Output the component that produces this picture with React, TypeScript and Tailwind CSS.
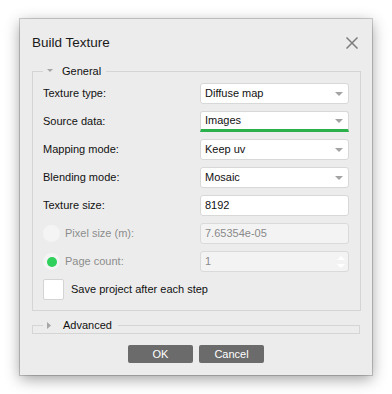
import React from 'react';

const font = { fontFamily: '"Liberation Sans", Arial, sans-serif' };

function Caret() {
  return (
    <svg width="8" height="4" viewBox="0 0 8 4" className="shrink-0">
      <path d="M0 0 H8 L4 4 Z" fill="#a3a3a3" />
    </svg>
  );
}

function Select({ value, active }: { value: string; active?: boolean }) {
  return (
    <div
      className={
        'w-[149px] h-[21px] bg-white flex items-center justify-between pl-[4px] pr-[5px] text-[11px] text-[#111] border border-[#d8d8d8] ' +
        (active ? 'rounded-t-[3px] border-b-[3px] border-b-[#2bb04c]' : 'rounded-[3px]')
      }
    >
      <span>{value}</span>
      <Caret />
    </div>
  );
}

function Row({ label, children }: { label: string; children: React.ReactNode }) {
  return (
    <div className="flex items-center h-[21px]">
      <span className="w-[157px] text-[11px] text-[#111]">{label}</span>
      {children}
    </div>
  );
}

function Radio({ checked }: { checked?: boolean }) {
  return (
    <span className="w-[17px] h-[17px] rounded-full bg-[#f4f4f4] flex items-center justify-center shrink-0">
      {checked && <span className="w-[10px] h-[10px] rounded-full bg-[#2fd05c]" />}
    </span>
  );
}

export default function App() {
  return (
    <div className="w-[392px] h-[394px] bg-white overflow-hidden pt-[19px]" style={font}>
      <div className="ml-[20px] w-[352px] h-[356px] bg-[#ececec] flex flex-col shadow-[0_0_0_1px_rgba(0,0,0,0.18),0_4px_14px_rgba(0,0,0,0.38)]">
        <div className="h-[44px] pt-[4px] flex items-center justify-between pl-[12px] pr-[14px]">
          <span className="text-[13.5px] text-[#1a1a1a]">Build Texture</span>
          <svg width="12" height="12" viewBox="0 0 12 12">
            <path d="M0.5 0.5 L11.5 11.5 M11.5 0.5 L0.5 11.5" stroke="#7c7c7c" strokeWidth="1.5" />
          </svg>
        </div>

        <fieldset className="mx-[12px] border border-[#d5d5d5] pl-[10px] pr-[11px] pt-[4px] pb-[10px]">
          <legend className="h-[16px] flex items-center pl-[4px] pr-[5px]">
            <svg width="6" height="3" viewBox="0 0 6 3" className="mt-[-2px]">
              <path d="M0 0 H6 L3 3 Z" fill="#a6a6a6" />
            </svg>
            <span className="ml-[9px] text-[11px] text-[#111]">General</span>
          </legend>
          <div className="flex flex-col gap-[7px]">
            <Row label="Texture type:">
              <Select value="Diffuse map" />
            </Row>
            <Row label="Source data:">
              <Select value="Images" active />
            </Row>
            <Row label="Mapping mode:">
              <Select value="Keep uv" />
            </Row>
            <Row label="Blending mode:">
              <Select value="Mosaic" />
            </Row>
            <Row label="Texture size:">
              <div className="w-[149px] h-[21px] bg-white border border-[#d8d8d8] rounded-[3px] flex items-center pl-[4px] text-[11px] text-[#111]">
                8192
              </div>
            </Row>
            <div className="flex items-center h-[21px]">
              <div className="w-[157px] flex items-center gap-[5px]">
                <Radio />
                <span className="text-[11px] text-[#8c8c8c]">Pixel size (m):</span>
              </div>
              <div className="w-[149px] h-[21px] bg-[#f3f3f3] border border-[#dadada] rounded-[3px] flex items-center pl-[4px] text-[11px] text-[#8a8a8a]">
                7.65354e-05
              </div>
            </div>
            <div className="flex items-center h-[21px]">
              <div className="w-[157px] flex items-center gap-[5px]">
                <Radio checked />
                <span className="text-[11px] text-[#8c8c8c]">Page count:</span>
              </div>
              <div className="w-[149px] h-[21px] bg-[#f3f3f3] border border-[#dadada] rounded-[3px] flex items-center justify-between pl-[4px] pr-[3px] text-[11px] text-[#8a8a8a]">
                <span>1</span>
                <div className="flex flex-col gap-[4px]">
                  <svg width="8" height="4" viewBox="0 0 8 4">
                    <path d="M0 4 H8 L4 0 Z" fill="#ffffff" />
                  </svg>
                  <svg width="8" height="4" viewBox="0 0 8 4">
                    <path d="M0 0 H8 L4 4 Z" fill="#ffffff" />
                  </svg>
                </div>
              </div>
            </div>
            <div className="flex items-center h-[21px]">
              <span className="w-[21px] h-[21px] bg-white border border-[#d4d4d4] rounded-[2px]" />
              <span className="ml-[7px] text-[11px] text-[#111]">Save project after each step</span>
            </div>
          </div>
        </fieldset>

        <fieldset className="mx-[12px] mt-[6px] border border-[#d5d5d5] px-[10px]">
          <legend className="h-[16px] flex items-center pl-[4px] pr-[6px]">
            <svg width="4" height="7" viewBox="0 0 4 7">
              <path d="M0 0 V7 L4 3.5 Z" fill="#a6a6a6" />
            </svg>
            <span className="ml-[12px] text-[11px] text-[#111]">Advanced</span>
          </legend>
        </fieldset>

        <div className="mt-[11px] flex justify-center gap-[6px]">
          <button className="w-[65px] h-[18px] bg-[#6b6b6b] rounded-[2px] text-white text-[11px] leading-none">OK</button>
          <button className="w-[65px] h-[18px] bg-[#6b6b6b] rounded-[2px] text-white text-[11px] leading-none">Cancel</button>
        </div>
      </div>
    </div>
  );
}
